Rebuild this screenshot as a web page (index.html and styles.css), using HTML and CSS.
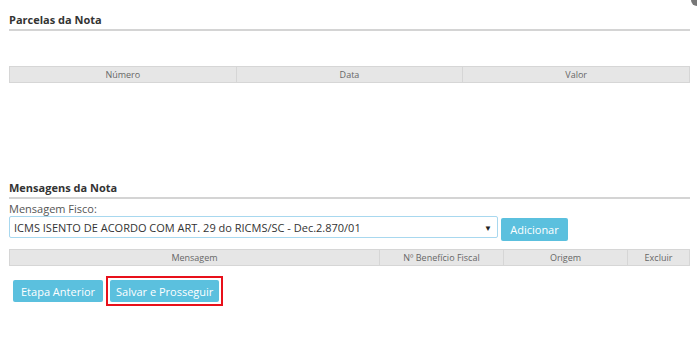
FILE: index.html
```html
<!DOCTYPE html>
<html>
  <head>
    <link rel="stylesheet" href="styles.css">
    <title>Parcelas e Mensagens</title>
  </head>

  <body>
    <span class="close"></span>

    <p class="section">Parcelas da Nota</p>

    <table class="grid parcelas">
      <tr>
        <th>Número</th>
        <th>Data</th>
        <th>Valor</th>
      </tr>
    </table>

    <p class="section mensagens">Mensagens da Nota</p>

    <label class="lbl">Mensagem Fisco:</label>
    <div class="row">
      <div class="select">
        <span>ICMS ISENTO DE ACORDO COM ART. 29 do RICMS/SC - Dec.2.870/01</span>
        <span class="arrow">&#9660;</span>
      </div>
      <button class="btn add">Adicionar</button>
    </div>

    <table class="grid msgs">
      <tr>
        <th class="c1">Mensagem</th>
        <th class="c2">Nº Benefício Fiscal</th>
        <th class="c3">Origem</th>
        <th class="c4">Excluir</th>
      </tr>
    </table>

    <div class="actions">
      <button class="btn">Etapa Anterior</button>
      <span class="mark"><button class="btn">Salvar e Prosseguir</button></span>
    </div>
  </body>
</html>
```

FILE: styles.css
```css
body{
  margin: 0;
  padding: 0 7px 0 9px;
  background-color: white;
  color: #333;
  font-family: "Open Sans", Arial, sans-serif;
  font-size: 11px;
}

.close{
  position: absolute;
  top: -6px;
  right: -6px;
  width: 12px;
  height: 12px;
  border-radius: 50%;
  background-color: #777;
}

.section{
  margin: 0;
  padding-top: 12px;
  padding-bottom: 2px;
  font-size: 11px;
  font-weight: bold;
  color: #333;
  border-bottom: 2px solid #d4d4d4;
}

.mensagens{
  padding-top: 0;
  margin-top: 97px;
}

.grid{
  width: 100%;
  border-collapse: collapse;
  table-layout: fixed;
}

.grid th{
  height: 15px;
  padding: 0;
  background-color: #e6e6e6;
  border: 1px solid #d6d6d6;
  color: #666;
  font-size: 9px;
  font-weight: normal;
}

.parcelas{
  margin-top: 35px;
}

.msgs{
  margin-top: 8px;
}

.c1{ width: 369px; }
.c2{ width: 123px; }
.c3{ width: 123px; }

.lbl{
  display: block;
  margin-top: 2px;
  color: #555;
}

.row{
  display: flex;
  align-items: flex-start;
  gap: 3px;
}

.select{
  display: flex;
  justify-content: space-between;
  align-items: center;
  width: 478px;
  height: 20px;
  padding: 0 5px 0 4px;
  border: 1px solid #a8d8ef;
  border-radius: 2px;
  color: #333;
}

.arrow{
  font-size: 8px;
  color: #222;
}

.btn{
  background-color: #5bc0de;
  color: white;
  border: 0;
  border-radius: 2px;
  font-family: "Open Sans", Arial, sans-serif;
  font-size: 11px;
  height: 22px;
  padding: 0 8px;
}

.add{
  margin-top: 2px;
  height: 23px;
  width: 67px;
}

.actions{
  display: flex;
  align-items: center;
  gap: 3px;
  margin-top: 10px;
  padding-left: 4px;
}

.mark{
  display: inline-block;
  padding: 2px;
  border: 2px solid #e8101a;
}

.mark .btn{
  padding: 0 6px;
}
```
